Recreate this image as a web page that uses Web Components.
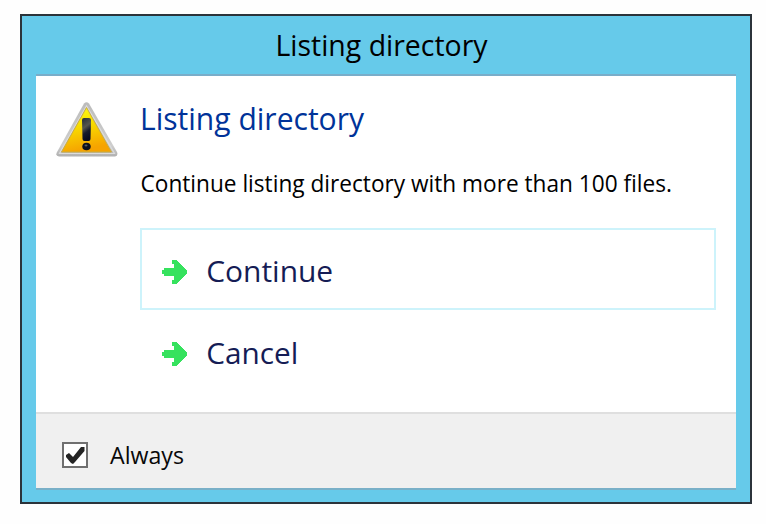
<!DOCTYPE html>
<html lang="en">
<head>
<meta charset="utf-8">
<title>Listing directory</title>
<style>
  body { margin: 0; background: #fefefe; font-family: "Open Sans", "Noto Sans", sans-serif; }
  dialog-window { margin: 14px 0 0 20px; }
</style>
</head>
<body>
<dialog-window>
  <text-line slot="title" size="29.5" width="211" height="58" baseline="40" start="-5.500" length="212">Listing directory</text-line>
  <task-message>
    <warning-icon slot="icon"></warning-icon>
    <text-line slot="heading" style="color:#003399" size="30.5" width="222" height="64" baseline="30" start="0" length="224">Listing directory</text-line>
    <text-line slot="text" style="color:#000" size="24.3" width="531" height="64" baseline="28" start="0.500" length="531.500">Continue listing directory with more than 100 files.</text-line>
    <command-link selected><text-line size="30" width="126" height="78" baseline="52" start="0.200" length="127">Continue</text-line></command-link>
    <command-link><text-line size="30" width="91" height="78" baseline="52" start="0.200" length="92">Cancel</text-line></command-link>
  </task-message>
  <check-option slot="footer"><text-line size="24.3" width="74" height="74" baseline="50" start="0" length="74">Always</text-line></check-option>
</dialog-window>
<script>
  const define = (name, html, setup) => customElements.define(name, class extends HTMLElement {
    connectedCallback() {
      if (this.shadowRoot) return;
      this.attachShadow({ mode: "open" }).innerHTML = html;
      if (setup) setup(this);
    }
  });

  define("dialog-window", `
    <style>
      :host { display: flex; flex-direction: column; box-sizing: border-box; width: 732px; height: 490px;
              border: 2px solid #2b333a; background: #66caea; padding: 0 14px; }
      header { display: flex; justify-content: center; height: 58px; flex: none; }
      main { border-top: 2px solid #79adc9; background: #fff; height: 336px; flex: none; }
      footer { border-top: 2px solid #dfdfdf; border-bottom: 2px solid #79b0c8; background: #f0f0f0; height: 74px; flex: none; }
    </style>
    <header><slot name="title"></slot></header>
    <main><slot></slot></main>
    <footer><slot name="footer"></slot></footer>`);

  define("task-message", `
    <style>
      :host { display: grid; grid-template-columns: 84px 576px; padding: 24px 20px 0; }
      .icon { padding-top: 2px; }
      .body { display: flex; flex-direction: column; }
    </style>
    <div class="icon"><slot name="icon"></slot></div>
    <div class="body"><slot name="heading"></slot><slot name="text"></slot><slot></slot></div>`);

  define("command-link", `
    <style>
      :host { display: flex; align-items: center; box-sizing: border-box; width: 576px; height: 82px;
              border: 2px solid transparent; padding-left: 20px; gap: 20px; color: #151c55; }
      :host([selected]) { border-color: #cdf3fb; }
      svg { display: block; width: 25px; height: 24px; margin: 6px -1px 0 0; }
    </style>
    <svg viewBox="0 0 25 24" shape-rendering="crispEdges"><path fill="#36e25e" d="M10 0h4L25 11v2L14 24h-4v-4h2v-4H2v-2H0v-4h2V8h10V4h-2z"/></svg>
    <slot></slot>`);

  define("check-option", `
    <style>
      :host { display: flex; align-items: center; padding-left: 26px; gap: 22px; color: #080808; height: 74px; }
      svg { display: block; width: 26px; height: 26px; margin-top: 8px; }
    </style>
    <svg viewBox="0 0 26 26"><path fill="#fff" stroke="#707070" stroke-width="2" d="M1 1h24v24H1z"/>
      <path fill="#242424" d="M4 13l3-2 4 4 8-10h3.500v4L13 20l-2 2-2-1-5-6z"/></svg>
    <slot></slot>`);

  define("warning-icon", `
    <style>:host { display: block; width: 62px; height: 56px; } svg { display: block; }</style>
    <svg width="62" height="57" viewBox="0 0 62 57">
      <defs>
        <linearGradient id="y" x2=".25" y2="1"><stop stop-color="#ffff16"/><stop offset=".45" stop-color="#f8df00"/><stop offset="1" stop-color="#f6a300"/></linearGradient>
        <linearGradient id="g" x2="0" y2="1"><stop stop-color="#bcbcbc"/><stop offset=".8" stop-color="#cecece"/><stop offset="1" stop-color="#b0b0b0"/></linearGradient>
        <linearGradient id="k" x2=".3" y2="1"><stop stop-color="#242c36"/><stop offset=".45" stop-color="#55554e"/><stop offset=".7" stop-color="#161b2c"/><stop offset="1" stop-color="#080b20"/></linearGradient>
      </defs>
      <path fill="url(#g)" d="M28 1.500q2.500-2.500 5 0L61 50q1.500 4-2 4.500H3q-4-.5-2-4.500z"/>
      <path fill="none" stroke="#dcdcdc" stroke-width="1.200" d="M30.500 4L3.500 51.500h55z"/>
      <path fill="url(#y)" stroke="#c9ac45" stroke-width="1" d="M30.500 5.500L5.500 50h50z"/>
      <path fill="url(#k)" d="M26 18q0-2 2-2h5q2 0 2 2l-.5 19q0 2-2 2h-4q-2 0-2-2z"/>
      <ellipse cx="30.500" cy="44.500" rx="4.200" ry="3.800" fill="#0d101d"/>
      <ellipse cx="30" cy="43.500" rx="1.500" ry="1" fill="#555b62"/>
    </svg>`);

  /* One line of text fitted to a given length; start and baseline are measured from the box's top left. */
  define("text-line", `
    <style>:host { display: block; flex: none; } svg { display: block; overflow: visible; } text { fill: currentColor; white-space: pre; }</style>
    <svg><text></text></svg>`, el => {
    const a = n => +el.getAttribute(n);
    const svg = el.shadowRoot.querySelector("svg"), text = svg.querySelector("text");
    svg.setAttribute("width", a("width"));
    svg.setAttribute("height", a("height"));
    text.setAttribute("x", a("start"));
    text.setAttribute("y", a("baseline"));
    text.setAttribute("font-size", a("size"));
    text.setAttribute("textLength", a("length"));
    text.setAttribute("lengthAdjust", "spacingAndGlyphs");
    text.textContent = el.textContent;
  });
</script>
</body>
</html>
